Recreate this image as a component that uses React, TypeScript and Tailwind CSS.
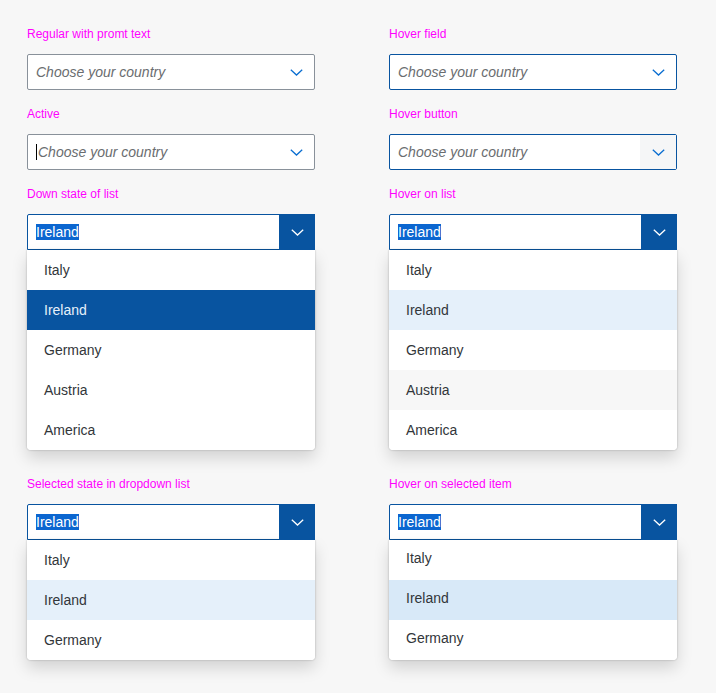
import React from 'react';

type Item = { name: string; bg?: string; text?: string };

const font = { fontFamily: '"Liberation Sans", Arial, sans-serif' };

function Chevron({ color }: { color: string }) {
  return (
    <svg width="13" height="7" viewBox="0 0 13 7" fill="none">
      <polyline points="0.8,0.8 6.5,6 12.2,0.8" stroke={color} strokeWidth="1.3" />
    </svg>
  );
}

function Label({ children }: { children: React.ReactNode }) {
  return <div className="h-[18px] pt-[2px] text-[12px] leading-4 text-[#ff00ff]">{children}</div>;
}

function Field({
  variant,
}: {
  variant: 'regular' | 'active' | 'hoverField' | 'hoverButton';
}) {
  const border = variant === 'hoverField' || variant === 'hoverButton' ? 'border-[#0854a0]' : 'border-[#89919a]';
  return (
    <div className={`mt-3 flex h-9 rounded-[2px] border bg-white ${border}`}>
      <div className="flex flex-1 items-center pl-2 text-[14px] italic text-[#6a6d70]">
        {variant === 'active' && <span className="mr-[1px] h-4 w-px bg-black"></span>}
        Choose your country
      </div>
      <div
        className={`flex w-9 items-center justify-center ${variant === 'hoverButton' ? 'bg-[#f5f6f7]' : ''}`}
      >
        <Chevron color="#0a6ed1" />
      </div>
    </div>
  );
}

function OpenSelect({ items, shift = false }: { items: Item[]; shift?: boolean }) {
  return (
    <div className="mt-3">
      <div className="flex h-9 rounded-t-[2px] border border-[#0854a0] bg-white">
        <div className="flex flex-1 items-center pl-2 text-[14px]">
          <span className="bg-[#0b66d0] leading-4 text-white">Ireland</span>
        </div>
        <div className="-my-px -mr-px flex w-9 items-center justify-center bg-[#0854a0]">
          <Chevron color="#ffffff" />
        </div>
      </div>
      <div className="overflow-hidden rounded-b-[4px] bg-white shadow-[0_0_2px_0_rgba(0,0,0,0.3),0_8px_16px_0_rgba(0,0,0,0.15)]">
        {items.map((it) => (
          <div
            key={it.name}
            className={`flex h-10 items-center pl-[17px] text-[14px] ${shift ? 'pb-1' : ''} ${it.bg ?? 'bg-white'} ${it.text ?? 'text-[#32363a]'}`}
          >
            {it.name}
          </div>
        ))}
      </div>
    </div>
  );
}

export default function App() {
  const five = ['Italy', 'Ireland', 'Germany', 'Austria', 'America'];
  return (
    <div className="min-h-[693px] w-[716px] bg-[#f7f7f7] pl-[27px] pt-6" style={font}>
      <div className="grid grid-cols-[288px_288px] gap-x-[74px]">
        <div>
          <Label>Regular with promt text</Label>
          <Field variant="regular" />
        </div>
        <div>
          <Label>Hover field</Label>
          <Field variant="hoverField" />
        </div>

        <div className="mt-[14px]">
          <Label>Active</Label>
          <Field variant="active" />
        </div>
        <div className="mt-[14px]">
          <Label>Hover button</Label>
          <Field variant="hoverButton" />
        </div>

        <div className="mt-[14px]">
          <Label>Down state of list</Label>
          <OpenSelect
            items={five.map((n) =>
              n === 'Ireland' ? { name: n, bg: 'bg-[#0854a0]', text: 'text-[#e5f0fa]' } : { name: n }
            )}
          />
        </div>
        <div className="mt-[14px]">
          <Label>Hover on list</Label>
          <OpenSelect
            items={five.map((n) =>
              n === 'Ireland'
                ? { name: n, bg: 'bg-[#e5f0fa]' }
                : n === 'Austria'
                  ? { name: n, bg: 'bg-[#f7f7f7]' }
                  : { name: n }
            )}
          />
        </div>

        <div className="mt-6">
          <Label>Selected state in dropdown list</Label>
          <OpenSelect
            items={['Italy', 'Ireland', 'Germany'].map((n) =>
              n === 'Ireland' ? { name: n, bg: 'bg-[#e5f0fa]' } : { name: n }
            )}
          />
        </div>
        <div className="mt-6">
          <Label>Hover on selected item</Label>
          <OpenSelect
            shift
            items={['Italy', 'Ireland', 'Germany'].map((n) =>
              n === 'Ireland' ? { name: n, bg: 'bg-[#d8e9f8]' } : { name: n }
            )}
          />
        </div>
      </div>
    </div>
  );
}
